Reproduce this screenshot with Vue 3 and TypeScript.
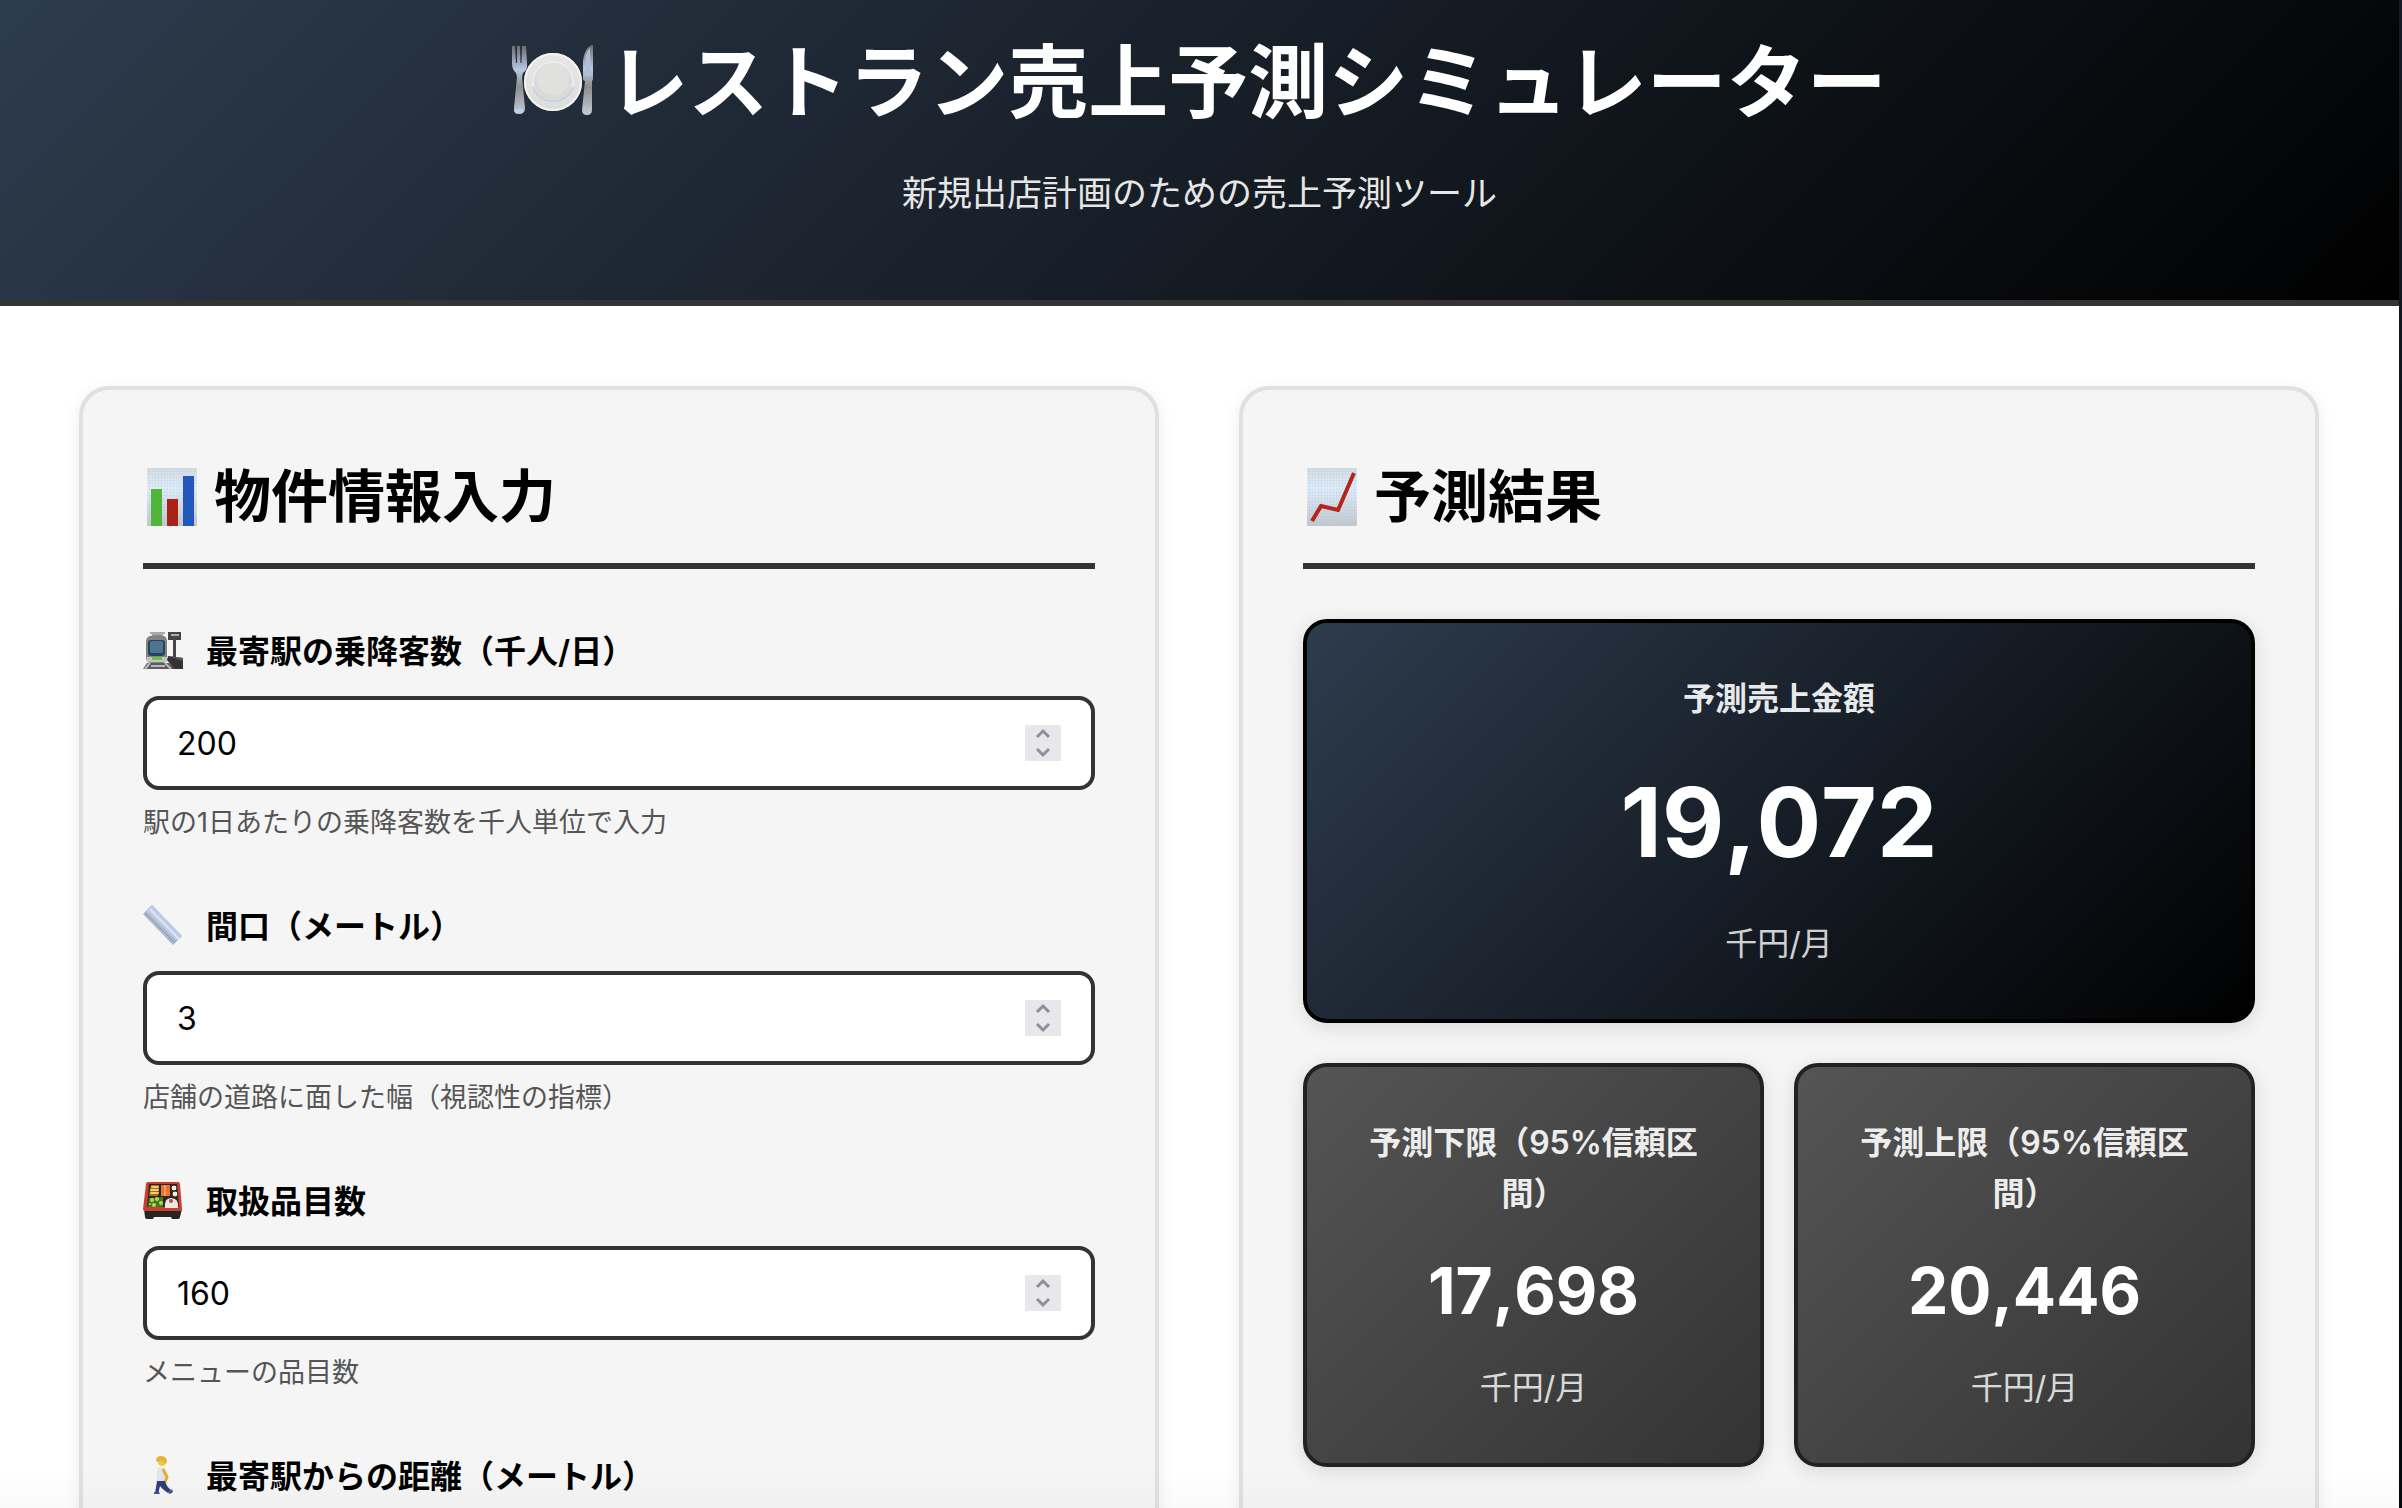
<script setup lang="ts">
import { reactive, computed } from 'vue'

type IconName = 'station' | 'ruler' | 'bento' | 'walk'

interface Field {
  id: string
  icon: IconName
  label: string
  value: number | null
  hint: string
}

const fields = reactive<Field[]>([
  { id: 'passengers', icon: 'station', label: '最寄駅の乗降客数（千人/日）', value: 200, hint: '駅の1日あたりの乗降客数を千人単位で入力' },
  { id: 'frontage', icon: 'ruler', label: '間口（メートル）', value: 3, hint: '店舗の道路に面した幅（視認性の指標）' },
  { id: 'items', icon: 'bento', label: '取扱品目数', value: 160, hint: 'メニューの品目数' },
  { id: 'distance', icon: 'walk', label: '最寄駅からの距離（メートル）', value: null, hint: '' },
])

const forecast = reactive({ sales: 19072, lower: 17698, upper: 20446 })

const bounds = computed(() => [
  { label: '予測下限（95%信頼区間）', value: forecast.lower },
  { label: '予測上限（95%信頼区間）', value: forecast.upper },
])

const format = (n: number): string => n.toLocaleString('en-US')

function step(field: Field, delta: number): void {
  field.value = Math.max(0, (field.value ?? 0) + delta)
}
</script>

<template>
  <div class="window">
    <div class="page">
      <header class="header">
        <h1>
          <svg class="plate-icon" viewBox="0 0 82 70" aria-hidden="true">
            <defs>
              <linearGradient id="metal" x1="0" y1="0" x2="0" y2="1">
                <stop offset="0" stop-color="#6d6d6d" />
                <stop offset=".35" stop-color="#b9c9e2" />
                <stop offset=".6" stop-color="#8d8d8d" />
                <stop offset="1" stop-color="#c3cbd6" />
              </linearGradient>
              <linearGradient id="china" x1="0" y1="0" x2="0" y2="1">
                <stop offset="0" stop-color="#e9e7e4" />
                <stop offset="1" stop-color="#dcdcdb" />
              </linearGradient>
            </defs>
            <path d="M0 1h3l1 17h1L5 1h3l.500 17h1L10 1h4l1 17q1 7-4 10l-1 4 3 31q0 6-6 6t-5-6l3-31-1-4q-4-3-4-10z" fill="url(#metal)" />
            <path d="M81 0q-8 1-10 16v17q0 3 2 3l-3 29q0 5 5 5t5-5V36q1 0 1-3z" fill="url(#metal)" />
            <path d="M78 3q-5 5-5 16v12h4q2 0 2-3z" fill="#aebfd6" />
            <circle cx="41" cy="37" r="29" fill="url(#china)" />
            <circle cx="41" cy="37" r="28" fill="none" stroke="#f5f3f0" stroke-width="2" />
            <circle cx="41" cy="37" r="20" fill="#dadada" stroke="#e9edf3" stroke-width="2" />
            <path d="M21 42a21 21 0 0 0 40 0" fill="none" stroke="#c4d0e2" stroke-width="2" />
            <circle cx="41" cy="34" r="16" fill="#e0e0df" />
            <ellipse cx="7" cy="66" rx="4" ry="2" fill="#b9d2f3" />
          </svg>
          <span>レストラン売上予測シミュレーター</span>
        </h1>
        <p>新規出店計画のための売上予測ツール</p>
      </header>

      <main class="content">
        <section class="panel">
          <h2>
            <svg class="title-icon" viewBox="0 0 58 58" aria-hidden="true">
              <defs>
                <linearGradient id="paper" x1="0" y1="0" x2="0" y2="1">
                  <stop offset="0" stop-color="#d6dde2" />
                  <stop offset=".35" stop-color="#e1eefa" />
                  <stop offset="1" stop-color="#c3c7cc" />
                </linearGradient>
                <pattern id="grid" width="3" height="3" patternUnits="userSpaceOnUse">
                  <path d="M0 0h3M0 0v3" stroke="#a7c4dd" stroke-width="1" opacity=".45" />
                </pattern>
              </defs>
              <rect x="4" width="50" height="58" rx="1" fill="url(#paper)" />
              <rect x="4" width="50" height="58" rx="1" fill="url(#grid)" />
              <rect x="8" y="21" width="11" height="37" fill="#52b53b" />
              <rect x="24" y="31" width="11" height="27" fill="#aa2118" />
              <rect x="40" y="8" width="11" height="50" fill="#2457bc" />
            </svg>
            <span>物件情報入力</span>
          </h2>

          <div v-for="field in fields" :key="field.id" class="field">
            <label :for="field.id">
              <svg class="field-icon" viewBox="0 0 40 40" aria-hidden="true">
                <g v-if="field.icon === 'station'">
                  <path d="M25 2h13v8h-5v18h-3V10h-5z" fill="#454545" />
                  <path d="M28 4h8v2h-8z" fill="#aeaeae" />
                  <path d="M7 3h15M9 5h11" stroke="#a9a9a9" stroke-width="2" />
                  <path d="M7 6q8-2 14 0 3 1 3 6v14q0 7-4 7H7q-4 0-4-7V12q0-5 4-6z" fill="#85837d" />
                  <rect x="5" y="10" width="17" height="16" rx="3" fill="#27445c" />
                  <rect x="7" y="11" width="13" height="12" rx="2" fill="#4d7491" />
                  <path d="M4 27h20v5H4z" fill="#c4c4c4" />
                  <path d="M9 27h10v3H9z" fill="#68c440" />
                  <path d="M4 33h22l6 6H0z" fill="#5b5b5b" />
                  <path d="m7 33-5 6m20-6 6 6M8 36h14" stroke="#b9b9b9" stroke-width="2" />
                  <path d="m25 26 15 2v11H31l-7-9z" fill="#333" />
                  <path d="m25 26 15 2v3z" fill="#555" />
                </g>
                <g v-else-if="field.icon === 'ruler'">
                  <path d="M0 9 9 0l30 31-9 9z" fill="#a8b6ce" />
                  <path d="m3 6 6-6 30 31-5 5z" fill="#bfcbe0" />
                  <path d="m2 8 30 30" stroke="#8d9db7" stroke-width="1" />
                  <path d="m7 4 29 30" stroke="#dce6f3" stroke-width="2" />
                </g>
                <g v-else-if="field.icon === 'bento'">
                  <path d="m1 29 1 8q0 2 2 2h6l1-2h17l1 2h6q2 0 2-2l2-8z" fill="#292524" />
                  <path d="M5 2h30q2 0 2 2l2 25q0 2-2 2H2q-2 0-2-2L3 4q0-2 2-2z" fill="#c7402f" />
                  <path d="M6 4h28l2 23H4z" fill="#302423" />
                  <path d="M8 5h8l-1 11H6z" fill="#a86c24" />
                  <path d="M9 7h6M8 10h7M8 13h7" stroke="#f0cf67" stroke-width="2" stroke-linecap="round" />
                  <path d="M18 5h9v11h-9z" fill="#e7762c" />
                  <path d="M22 5v11" stroke="#f6c29a" stroke-width="1" />
                  <g fill="#f0ebe3" stroke="#252525">
                    <circle cx="31" cy="8" r="3" /><circle cx="32" cy="14" r="3" />
                  </g>
                  <path d="m6 18 14-1v10H5z" fill="#427c22" />
                  <g fill="#b4d94f">
                    <circle cx="9" cy="20" r="2" /><circle cx="14" cy="19" r="2" />
                    <circle cx="18" cy="23" r="2" /><circle cx="11" cy="25" r="2" /><circle cx="7" cy="24" r="1" />
                  </g>
                  <path d="M22 28q-1-10 6-10 8 0 7 10z" fill="#e9e8e6" />
                  <circle cx="28" cy="21" r="2" fill="#d34331" />
                </g>
                <g v-else>
                  <path d="M15 13q4-2 7 1l2 9-2 6h-8q-1-9 1-16z" fill="#dfe5ec" />
                  <path d="m20 14 4 8-3 8" fill="none" stroke="#e3ad35" stroke-width="3" />
                  <circle cx="19" cy="7" r="4" fill="#f2c551" />
                  <path d="M13 6q0-5 5-5 6 0 6 6l-2 2-3-4-4 2z" fill="#e2b536" />
                  <path d="M14 26h8q1 5 6 9l-3 3q-6-4-8-7l-2 8h-3z" fill="#313b7d" />
                  <path d="M11 37h5l1 2h-6zm14 1 4-4 1 3-3 2z" fill="#4a5570" />
                </g>
              </svg>
              <span>{{ field.label }}</span>
            </label>
            <div class="number-box">
              <input :id="field.id" v-model.number="field.value" type="number" min="0" />
              <div class="spinner">
                <button type="button" :aria-label="`${field.label} +`" @click="step(field, 1)">
                  <svg viewBox="0 0 14 8" aria-hidden="true"><path d="m1 7 6-6 6 6" /></svg>
                </button>
                <button type="button" :aria-label="`${field.label} -`" @click="step(field, -1)">
                  <svg viewBox="0 0 14 8" aria-hidden="true"><path d="m1 1 6 6 6-6" /></svg>
                </button>
              </div>
            </div>
            <p class="hint">{{ field.hint }}</p>
          </div>
        </section>

        <section class="panel">
          <h2>
            <svg class="title-icon" viewBox="0 0 58 58" aria-hidden="true">
              <rect x="4" width="50" height="58" rx="1" fill="url(#paper)" />
              <rect x="4" width="50" height="58" rx="1" fill="url(#grid)" />
              <path d="M9 53 18 38l17 4L51 5" fill="none" stroke="#b5251c" stroke-width="4" />
            </svg>
            <span>予測結果</span>
          </h2>

          <div class="card card-main">
            <p class="card-label">予測売上金額</p>
            <p class="card-value">{{ format(forecast.sales) }}</p>
            <p class="card-unit">千円/月</p>
          </div>
          <div class="bounds">
            <div v-for="bound in bounds" :key="bound.label" class="card">
              <p class="card-label">{{ bound.label }}</p>
              <p class="card-value">{{ format(bound.value) }}</p>
              <p class="card-unit">千円/月</p>
            </div>
          </div>
        </section>
      </main>
    </div>
    <div class="fade"></div>
  </div>
</template>

<style>
body {
  margin: 0;
}
</style>

<style scoped>
.window {
  position: relative;
  box-sizing: border-box;
  height: 100vh;
  padding-right: 3px;
  overflow: hidden;
  background: linear-gradient(#151a24, #02080b);
  color: #000;
  font-family: Inter, 'Noto Sans CJK JP', sans-serif;
  font-size: 32px;
  line-height: 51px;
}

.page {
  background: #fff;
}

h1,
h2,
p {
  margin: 0;
}

svg {
  display: block;
  flex: none;
}

.header {
  padding: 18px 80px 79px;
  border-bottom: 6px solid #333;
  background: linear-gradient(135deg, #2d3c4e, #000);
  color: #fff;
  text-align: center;
}

.header h1 {
  display: flex;
  align-items: center;
  justify-content: center;
  gap: 14px;
  margin-bottom: 19px;
  font-size: 80px;
  line-height: 128px;
}

.plate-icon {
  width: 82px;
  height: 70px;
  margin-bottom: 4px;
}

.header p {
  color: #e6e6e6;
  font-size: 35px;
  line-height: 56px;
}

.content {
  display: grid;
  grid-template-columns: 1fr 1fr;
  gap: 80px;
  padding: 80px 80px 80px 79px;
}

.panel {
  padding: 60px;
  border: 4px solid #e0e0e0;
  border-radius: 30px;
  background: #f5f5f5;
  box-shadow: 0 4px 16px rgba(0, 0, 0, 0.08);
}

.panel h2 {
  display: flex;
  align-items: center;
  gap: 13px;
  margin-bottom: 50px;
  padding-bottom: 20px;
  border-bottom: 6px solid #333;
  font-size: 57px;
  line-height: 93px;
}

.title-icon {
  width: 58px;
  height: 58px;
}

.field {
  margin-bottom: 48px;
}

.field label {
  display: flex;
  align-items: center;
  gap: 23px;
  margin-bottom: 12px;
  font-weight: 600;
  line-height: 65px;
}

.field-icon {
  width: 40px;
  height: 40px;
  margin-bottom: 4px;
}

.number-box {
  display: flex;
  align-items: center;
  box-sizing: border-box;
  height: 94px;
  padding: 0 30px;
  border: 4px solid #333;
  border-radius: 16px;
  background: #fff;
}

.number-box input {
  flex: 1;
  min-width: 0;
  padding: 0;
  border: 0;
  outline: 0;
  background: none;
  color: #000;
  font: inherit;
  appearance: textfield;
}

.number-box input::-webkit-inner-spin-button {
  appearance: none;
  margin: 0;
}

.spinner {
  display: flex;
  flex-direction: column;
  width: 36px;
  background: #e8e7ec;
}

.spinner button {
  display: flex;
  align-items: center;
  justify-content: center;
  height: 18px;
  padding: 0;
  border: 0;
  background: none;
}

.spinner svg {
  width: 14px;
  height: 8px;
  overflow: visible;
  fill: none;
  stroke: #908e9c;
  stroke-width: 3px;
}

.hint {
  margin-top: 10px;
  color: #555;
  font-size: 27px;
  line-height: 46px;
}

.card {
  padding: 50px;
  border: 4px solid #222;
  border-radius: 24px;
  background: linear-gradient(135deg, #555, #333) border-box;
  box-shadow: 0 4px 20px rgba(0, 0, 0, 0.12);
  color: #fff;
  text-align: center;
}

.card-main {
  margin-bottom: 40px;
  border-color: #000;
  background: linear-gradient(135deg, #2d3c4e, #000) border-box;
}

.bounds {
  display: grid;
  grid-template-columns: 1fr 1fr;
  gap: 30px;
}

.card-label {
  font-weight: 600;
  opacity: 0.9;
}

.card-value {
  margin: 21px 0 20px;
  font-size: 64px;
  font-weight: 700;
  font-kerning: none;
  line-height: 102px;
}

.card-main .card-value {
  margin-bottom: 19px;
  font-size: 96px;
  line-height: 154px;
}

.card-unit {
  opacity: 0.8;
}

.fade {
  position: absolute;
  right: 3px;
  bottom: 0;
  left: 0;
  height: 40px;
  background: linear-gradient(transparent, rgba(0, 0, 0, 0.02));
  pointer-events: none;
}
</style>
